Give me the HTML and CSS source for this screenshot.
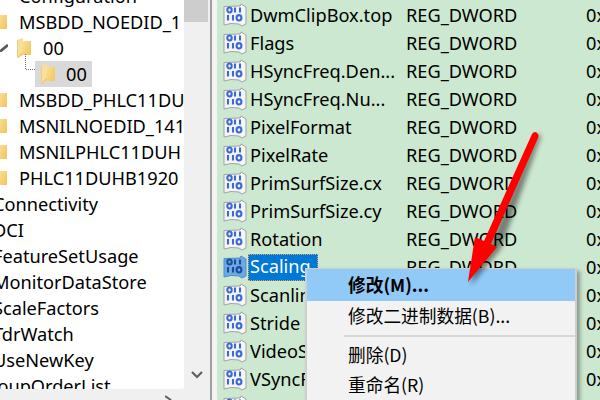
FILE: index.html
```html
<!DOCTYPE html>
<html lang="zh-CN">
<head>
<meta charset="utf-8">
<title>Registry Editor</title>
<link rel="stylesheet" href="styles.css">
</head>
<body>
<svg class="defs" width="0" height="0" aria-hidden="true">
  <defs>
    <linearGradient id="fold" x1="0" y1="0" x2="1" y2="0.6">
      <stop offset="0" stop-color="#fdeeb4"/>
      <stop offset="1" stop-color="#f3c766"/>
    </linearGradient>
    <symbol id="folder" viewBox="0 0 14 20" preserveAspectRatio="none">
      <path d="M0 2 L6 0 L6 3 L14 3 L14 17 L6 17 L1 20 L0 19 Z" fill="url(#fold)"/>
      <path d="M0 2 L5.500 .5 V14.500 L1 19.500 L0 18.500 Z" fill="#f9e09a"/>
      <path d="M0 2 V18.500 L1 19.500 L5.500 14.500" fill="none" stroke="#dcb565" stroke-width=".8"/>
    </symbol>
    <symbol id="dword" viewBox="0 0 24 24">
      <path d="M1 3.500 L17 3 L18 1 L23 4 L23 21 L19 23 L16 21 L8 20.500 L1 22 Z" fill="#f5f5f5" stroke="#a3a3a3" stroke-width="1"/>
      <g fill="none" stroke="#3a6ad8" stroke-width="2.100">
        <ellipse cx="6.500" cy="7" rx="2.200" ry="2.500"/>
        <path d="M12 4.500 V9.500 M17 4.500 V9.500"/>
        <path d="M5 12 V17.500 M10 12 V17.500"/>
        <ellipse cx="16" cy="14.800" rx="2.400" ry="2.700"/>
      </g>
    </symbol>
    <symbol id="dword-sel" viewBox="0 0 24 24">
      <path d="M1 3.500 L17 3 L18 1 L23 4 L23 21 L19 23 L16 21 L8 20.500 L1 22 Z" fill="#6fa9e0" stroke="#4f8fd0" stroke-width="1"/>
      <g fill="none" stroke="#174f9f" stroke-width="2.100">
        <ellipse cx="6.500" cy="7" rx="2.200" ry="2.500"/>
        <path d="M12 4.500 V9.500 M17 4.500 V9.500"/>
        <path d="M5 12 V17.500 M10 12 V17.500"/>
        <ellipse cx="16" cy="14.800" rx="2.400" ry="2.700"/>
      </g>
    </symbol>
  </defs>
</svg>

<main class="app">
  <section class="tree-col">
    <div class="tree-row-wrap">
      <div class="tree">
        <div class="node lv1 cut-top"><span class="label">Configuration</span></div>
        <div class="node lv1"><svg class="folder"><use href="#folder"/></svg><span class="label">MSBDD_NOEDID_1</span></div>
        <div class="node lv2">
          <svg class="twist" viewBox="0 0 8 8"><path d="M0 7.500 L8 1" fill="none" stroke="#5a5a5a" stroke-width="2.800"/></svg>
          <svg class="folder"><use href="#folder"/></svg><span class="label">00</span>
        </div>
        <div class="node lv3">
          <svg class="guide" viewBox="0 0 14 26"><path d="M.5 0 V15.500 H13" fill="none" stroke="#777" stroke-dasharray="1 1"/></svg>
          <span class="sel"><svg class="folder"><use href="#folder"/></svg><span class="label">00</span></span>
        </div>
        <div class="node lv1"><svg class="folder"><use href="#folder"/></svg><span class="label">MSBDD_PHLC11DU</span></div>
        <div class="node lv1"><svg class="folder"><use href="#folder"/></svg><span class="label">MSNILNOEDID_141</span></div>
        <div class="node lv1"><svg class="folder"><use href="#folder"/></svg><span class="label">MSNILPHLC11DUH</span></div>
        <div class="node lv1"><svg class="folder"><use href="#folder"/></svg><span class="label">PHLC11DUHB1920</span></div>
        <div class="node lv0"><span class="label">Connectivity</span></div>
        <div class="node lv0"><span class="label">DCI</span></div>
        <div class="node lv0"><span class="label">FeatureSetUsage</span></div>
        <div class="node lv0"><span class="label">MonitorDataStore</span></div>
        <div class="node lv0"><span class="label">ScaleFactors</span></div>
        <div class="node lv0"><span class="label">TdrWatch</span></div>
        <div class="node lv0"><span class="label">UseNewKey</span></div>
        <div class="node lv-up"><span class="label">GroupOrderList</span></div>
      </div>
      <div class="vbar">
        <div class="thumb"></div>
        <svg class="down" viewBox="0 0 12 8"><path d="M1 1 L6 6 L11 1" fill="none" stroke="#606060" stroke-width="2.200"/></svg>
      </div>
    </div>
    <div class="hbar"><svg class="right" viewBox="0 0 8 6"><path d="M0 1 L6 5" fill="none" stroke="#606060" stroke-width="2"/></svg></div>
  </section>

  <div class="splitter"></div>

  <section class="list">
    <div class="row"><svg class="ico"><use href="#dword"/></svg><span class="name">DwmClipBox.top</span><span class="type">REG_DWORD</span><span class="data">0x</span></div>
    <div class="row"><svg class="ico"><use href="#dword"/></svg><span class="name">Flags</span><span class="type">REG_DWORD</span><span class="data">0x</span></div>
    <div class="row"><svg class="ico"><use href="#dword"/></svg><span class="name">HSyncFreq.Den...</span><span class="type">REG_DWORD</span><span class="data">0x</span></div>
    <div class="row"><svg class="ico"><use href="#dword"/></svg><span class="name">HSyncFreq.Nu...</span><span class="type">REG_DWORD</span><span class="data">0x</span></div>
    <div class="row"><svg class="ico"><use href="#dword"/></svg><span class="name">PixelFormat</span><span class="type">REG_DWORD</span><span class="data">0x</span></div>
    <div class="row"><svg class="ico"><use href="#dword"/></svg><span class="name">PixelRate</span><span class="type">REG_DWORD</span><span class="data">0x</span></div>
    <div class="row"><svg class="ico"><use href="#dword"/></svg><span class="name">PrimSurfSize.cx</span><span class="type">REG_DWORD</span><span class="data">0x</span></div>
    <div class="row"><svg class="ico"><use href="#dword"/></svg><span class="name">PrimSurfSize.cy</span><span class="type">REG_DWORD</span><span class="data">0x</span></div>
    <div class="row"><svg class="ico"><use href="#dword"/></svg><span class="name">Rotation</span><span class="type">REG_DWORD</span><span class="data">0x</span></div>
    <div class="row"><svg class="ico"><use href="#dword-sel"/></svg><span class="name"><span class="picked">Scaling</span></span><span class="type">REG_DWORD</span><span class="data">0x</span></div>
    <div class="row"><svg class="ico"><use href="#dword"/></svg><span class="name">Scanline</span><span class="type">REG_DWORD</span><span class="data">0x</span></div>
    <div class="row"><svg class="ico"><use href="#dword"/></svg><span class="name">Stride</span><span class="type">REG_DWORD</span><span class="data">0x</span></div>
    <div class="row"><svg class="ico"><use href="#dword"/></svg><span class="name">VideoStandard</span><span class="type">REG_DWORD</span><span class="data">0x</span></div>
    <div class="row"><svg class="ico"><use href="#dword"/></svg><span class="name">VSyncFreq</span><span class="type">REG_DWORD</span><span class="data">0x</span></div>
    <div class="row"><svg class="ico"><use href="#dword"/></svg><span class="name"></span></div>
  </section>
</main>

<nav class="menu">
  <div class="item active">修改(M)...</div>
  <div class="item">修改二进制数据(B)...</div>
  <div class="sep"></div>
  <div class="item">删除(D)</div>
  <div class="item">重命名(R)</div>
</nav>

<svg class="arrow" viewBox="0 0 600 400" aria-hidden="true">
  <defs>
    <filter id="soft" x="-30%" y="-30%" width="160%" height="160%"><feGaussianBlur stdDeviation="2.500"/></filter>
  </defs>
  <path d="M533 133 Q535 130 538 133 L500 240 L497 247 L468 282 L475 237 L484 247 Z" fill="#000" opacity=".45" filter="url(#soft)" transform="translate(3 3)"/>
  <path d="M532 134 Q535 130 538 134 Q539 136 538 138 L491 244 L497 247 L468 282 L475 237 L484 241 Z" fill="#fe0000"/>
</svg>
</body>
</html>
```
FILE: styles.css
```css
* { box-sizing: border-box; }
html, body { margin: 0; padding: 0; width: 600px; height: 400px; overflow: hidden; background: #f0f0f0; }
body { position: relative; font-family: "Noto Sans", "Noto Sans CJK SC", sans-serif; font-size: 18.2px; color: #000; }
.defs { position: absolute; }

.app { display: flex; width: 600px; height: 400px; overflow: hidden; }

.tree-col { width: 210px; flex: none; display: flex; flex-direction: column; }
.tree-row-wrap { display: flex; height: 389px; }
.tree { width: 184px; flex: none; background: #fff; overflow: hidden; border-radius: 0 0 2px 0; }
.node { height: 26px; display: flex; align-items: center; white-space: nowrap; position: relative; }
.cut-top { margin-top: -17px; }
.lv-up { margin-left: -23px; }
.lv0 { margin-left: -7px; }
.lv1 { margin-left: -7px; }
.lv2 { margin-left: 17px; }
.lv3 { margin-left: 25px; }
.folder { width: 14px; height: 20px; flex: none; margin-right: 12px; }
.cut-top .label { margin-left: 26px; }
.twist { position: absolute; left: -17px; top: 9px; width: 8px; height: 8px; }
.guide { width: 14px; height: 26px; flex: none; margin-top: -14px; margin-right: -4px; }
.sel { display: flex; align-items: center; height: 26px; width: 57px; padding-left: 6px; background: #d9d9d9; }
.sel .folder { margin-right: 11px; }

.vbar { width: 26px; flex: none; background: #f0f0f0; position: relative; }
.thumb { width: 24px; height: 22px; background: #cdcdcd; }
.down { position: absolute; left: 7px; top: 371px; width: 12px; height: 8px; }
.hbar { flex: 1; position: relative; background: #f0f0f0; }
.right { position: absolute; left: 165px; top: 6px; width: 8px; height: 6px; }

.splitter { width: 7px; flex: none; background: #f4f4f4; border-left: 2px solid #a0a0a0; }

.list { flex: 1; background: #cde8d0; padding: 1px 0 0 6px; overflow: hidden; }
.row { height: 28px; display: flex; align-items: center; white-space: nowrap; }
.ico { width: 24px; height: 24px; flex: none; margin-right: 3px; }
.name { width: 156px; flex: none; }
.type { width: 180px; flex: none; }
.data { flex: none; }
.picked { display: inline-block; height: 27px; line-height: 25px; margin-left: -2px; padding: 0 7px 0 2px; background: #0078d7; color: #fff; outline: 1px dotted #f0a040; outline-offset: -1px; }

.menu { position: absolute; left: 305px; top: 268px; width: 272px; height: 140px; background: #f2f2f2; border: 2px solid #cfcfcf; border-top-width: 1px; box-shadow: 3px 3px 4px rgba(0,0,0,.35); font-family: "Noto Sans CJK SC", "Noto Sans", sans-serif; font-size: 17.7px; }
.item { height: 30px; padding: 0 0 2px 41px; display: flex; align-items: center; white-space: nowrap; }
.item.active { height: 32px; background: #91c9f7; font-weight: 700; }
.sep { height: 2px; background: #d7d7d7; margin: 4px 0 3px 37px; }

.arrow { position: absolute; left: 0; top: 0; width: 600px; height: 400px; pointer-events: none; }
```
